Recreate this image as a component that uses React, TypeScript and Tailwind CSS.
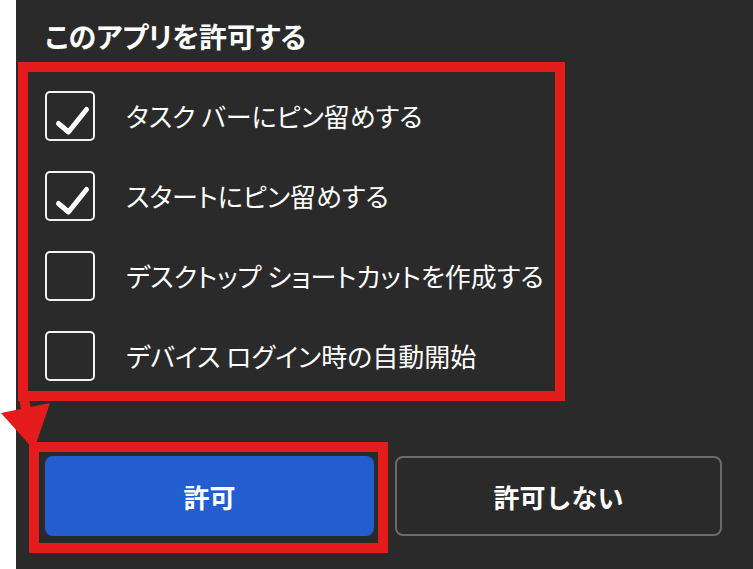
import React from "react";

const Check = () => (
  <svg width="49" height="49" viewBox="0 0 49 49" className="absolute left-0 top-0">
    <path d="M11.5 30.5 L21.5 39 L39.5 16.5" fill="none" stroke="#ffffff" strokeWidth="5" strokeLinecap="round" strokeLinejoin="round" />
  </svg>
);

const Row = ({ checked, label }: { checked: boolean; label: string }) => (
  <div className="flex h-[50px] items-center gap-[31px]">
    <div className="relative h-[50px] w-[50px] shrink-0 rounded-[5px] border-2 border-[#f2f2f2]">
      {checked && <Check />}
    </div>
    <span className="text-[26px] leading-[30px] text-white [font-feature-settings:'palt']">{label}</span>
  </div>
);

export default function App() {
  return (
    <div className="relative flex h-[569px] w-[753px] overflow-hidden font-['Noto_Sans_CJK_JP',sans-serif]">
      <div className="w-[16px] shrink-0 bg-white" />
      <div className="flex flex-1 flex-col bg-[#2a2a2a]">
        <div className="mb-[10px] pl-[29px] pt-[21px] text-[28px] font-bold leading-[31px] text-white [font-feature-settings:'palt']">
          このアプリを許可する
        </div>
        <div className="ml-[2px] flex h-[339px] w-[547px] flex-col gap-[30px] border-[10px] border-[#e41c1c] pl-[17px] pt-[19px]">
          <Row checked label="タスク バーにピン留めする" />
          <Row checked label="スタートにピン留めする" />
          <Row checked={false} label="デスクトップ ショートカットを作成する" />
          <Row checked={false} label="デバイス ログイン時の自動開始" />
        </div>
        <div className="ml-[13px] mt-[41px] flex items-start gap-[7px]">
          <div className="h-[111px] w-[359px] border-[10px] border-[#e41c1c] pb-[7px] pl-[6px] pr-[4px] pt-[4px]">
            <button className="flex h-[80px] w-full items-center justify-center rounded-[8px] bg-[#235dcf] text-[26px] font-bold text-white">
              許可
            </button>
          </div>
          <button className="mt-[14px] flex h-[80px] w-[327px] items-center justify-center rounded-[8px] border-2 border-[#6b6b6b] text-[26px] font-bold text-white">
            許可しない
          </button>
        </div>
      </div>
      <svg width="753" height="569" className="pointer-events-none absolute left-0 top-0">
        <line x1="23" y1="395" x2="28" y2="418" stroke="#e41c1c" strokeWidth="10" />
        <polygon points="1,413 50,403 34,450" fill="#e41c1c" />
      </svg>
    </div>
  );
}
